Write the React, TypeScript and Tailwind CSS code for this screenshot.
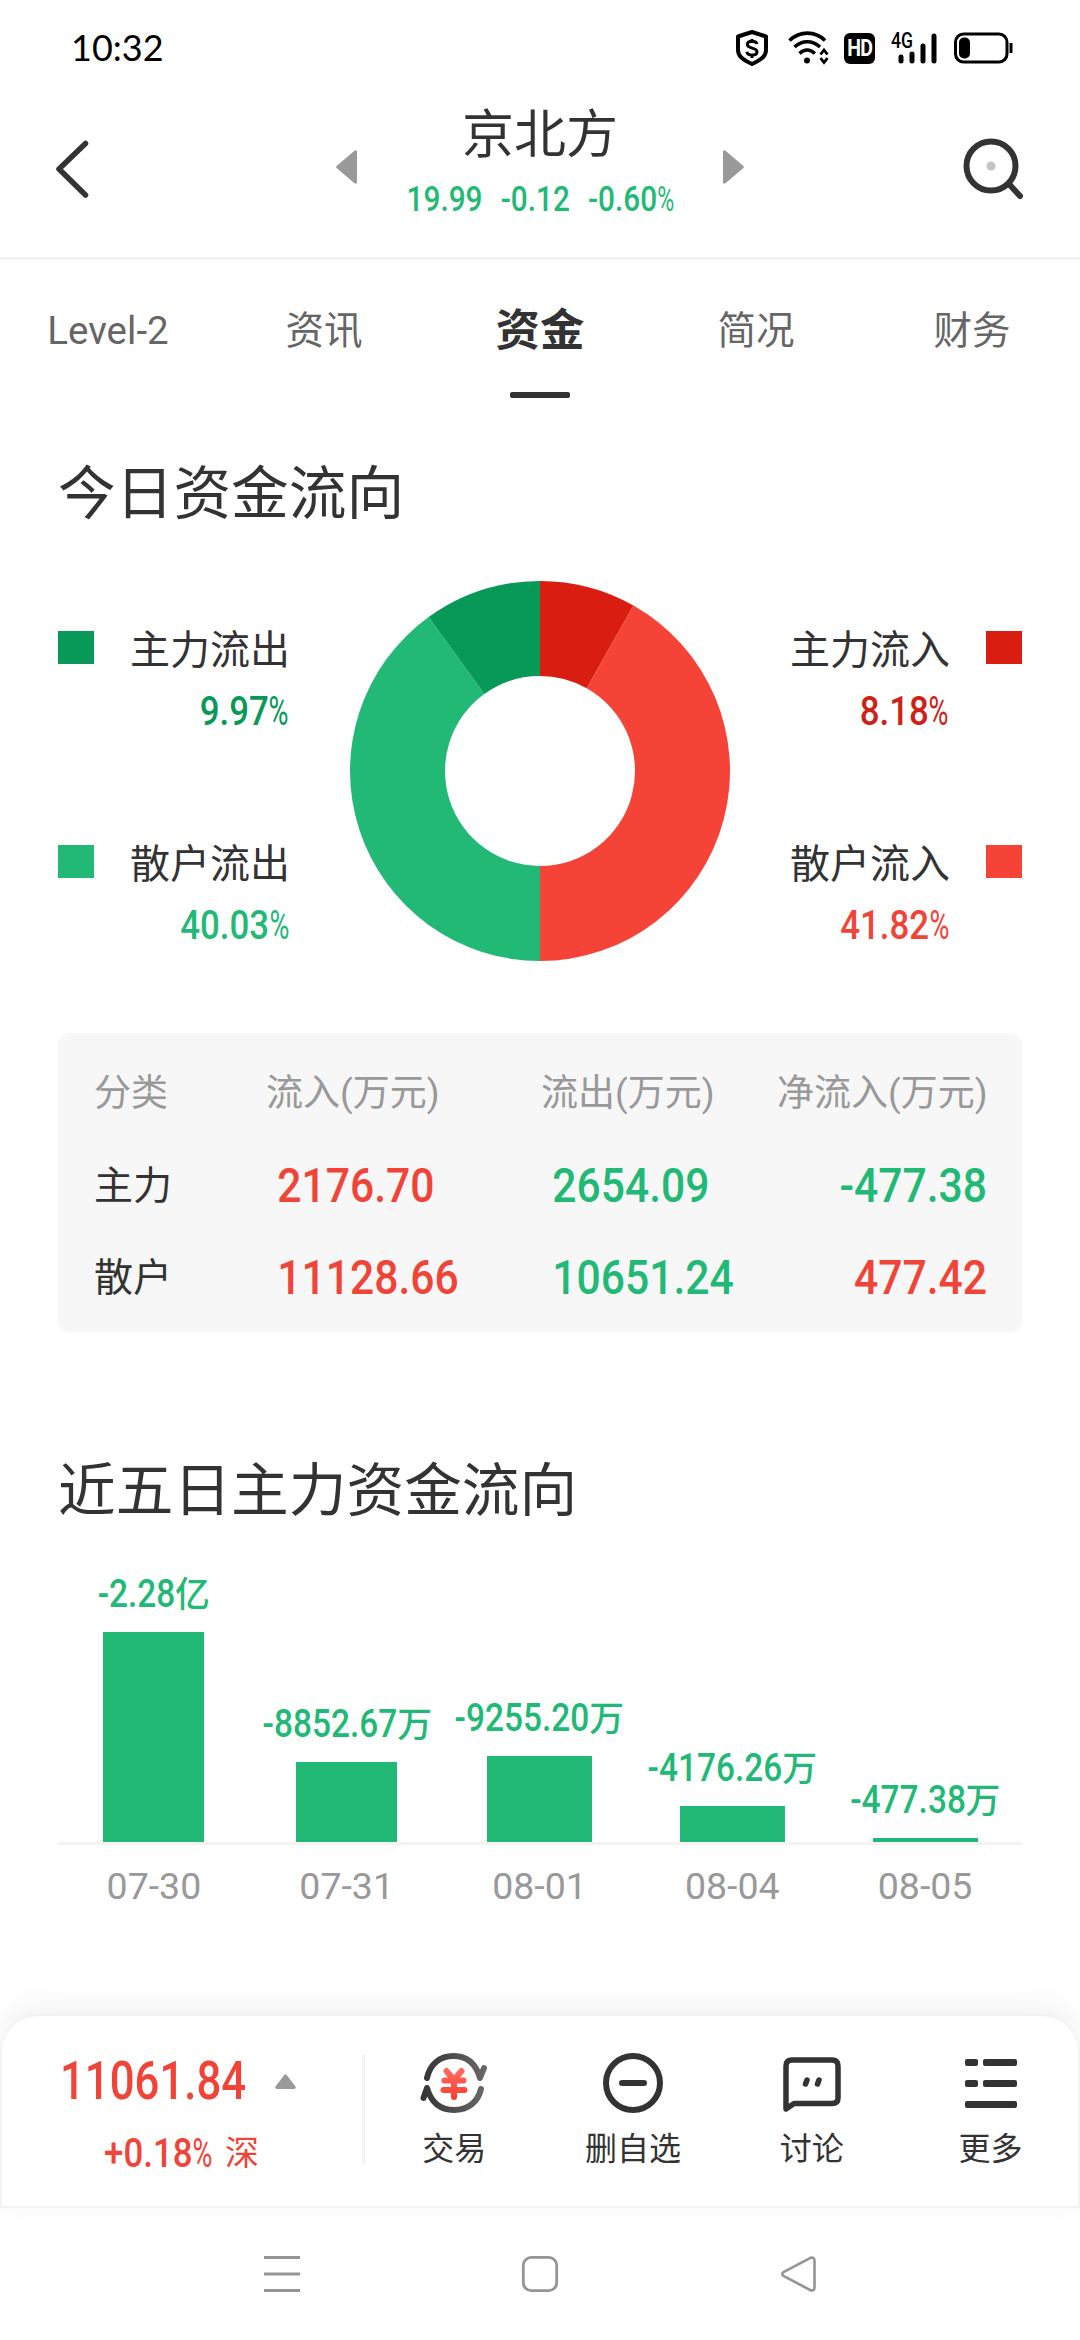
import React from 'react';
import clsx from 'clsx';

const legendLeft = [
  { label: '主力流出', value: '9.97%', box: 'bg-[#089857]', text: 'text-[#089857]' },
  { label: '散户流出', value: '40.03%', box: 'bg-[#22b977]', text: 'text-[#22b977]' },
];

const legendRight = [
  { label: '主力流入', value: '8.18%', box: 'bg-[#d91e11]', text: 'text-[#cc2217]' },
  { label: '散户流入', value: '41.82%', box: 'bg-[#f54437]', text: 'text-[#f04438]' },
];

const slices = [
  { value: 8.18, color: '#d91e11' },
  { value: 41.82, color: '#f54437' },
  { value: 40.03, color: '#22b977' },
  { value: 9.97, color: '#089857' },
];

const rows = [
  { name: '主力', in: '2176.70', out: '2654.09', net: '-477.38', netColor: 'text-[#22b977]' },
  { name: '散户', in: '11128.66', out: '10651.24', net: '477.42', netColor: 'text-[#f04438]' },
];

const days = [
  { date: '07-30', value: '-2.28', unit: '亿', width: 101, height: 210 },
  { date: '07-31', value: '-8852.67', unit: '万', width: 101, height: 80 },
  { date: '08-01', value: '-9255.20', unit: '万', width: 105, height: 86 },
  { date: '08-04', value: '-4176.26', unit: '万', width: 105, height: 36 },
  { date: '08-05', value: '-477.38', unit: '万', width: 105, height: 4 },
];

const tabs = ['Level-2', '资讯', '资金', '简况', '财务'];

// Narrow figures, with a slim percent sign
const Num: React.FC<{ children: string; className?: string; scale?: string }> = ({
  children,
  className,
  scale = 'scale-x-[0.85]',
}) => {
  const percent = children.endsWith('%');
  return (
    <span className={clsx('inline-block whitespace-pre font-medium', scale, className)}>
      {percent ? children.slice(0, -1) : children}
      {percent && <span className="inline-block w-[0.57em] origin-left scale-x-[0.78] font-normal">%</span>}
    </span>
  );
};

const StatusBar = () => (
  <div className="flex h-24 items-center justify-between pl-[71px] pr-[67px] text-black">
    <span className="-mt-[3px] font-['Lato'] text-[36px] leading-none">10:32</span>
    <div className="flex items-center">
      <svg width="34" height="36" viewBox="0 0 34 36" fill="none" stroke="#000">
        <path d="M17 2 31 6.500V20c0 5-2.500 8.500-14 14C5.500 28.500 3 25 3 20V6.500Z" strokeWidth="4" strokeLinejoin="round" />
        <path d="M22 14c-.5-2-2.500-2.800-5-2.800s-4.700 1-4.700 3.300c0 4.500 9.700 2.700 9.700 7.200 0 2.200-2.200 3.400-4.800 3.400-3 0-5-1.200-5.400-3.300M17 9v4M17 24v4" strokeWidth="3" />
      </svg>
      <svg className="ml-[19px]" width="41" height="34" viewBox="0 0 41 34" fill="none" stroke="#000" strokeWidth="3.600">
        <path d="M1.500 9.500C12-.3 27-.3 37 9.500M6.500 16C14 9 24.500 9 32 16M11.500 22.500c4.700-4.500 10.500-4.500 15.300 0" />
        <circle cx="19" cy="29.500" r="3" fill="#000" stroke="none" />
        <path d="m32.500 23.500 3.500-4.500 3.500 4.500M32.500 27l3.500 4.500 3.500-4.500" strokeWidth="2.800" />
      </svg>
      <span className="ml-[15px] flex h-[31px] w-[31px] items-center justify-center rounded-[6px] bg-black">
        <span className="font-['Roboto'] text-[23px] font-bold leading-none tracking-[-1px] text-white scale-x-[0.85]">HD</span>
      </span>
      <div className="relative ml-[17px] h-[32px] w-[45px]">
        <span className="absolute -left-px -top-[3px] origin-left font-['Roboto'] text-[22px] font-medium leading-[24px] scale-x-[0.8]">4G</span>
        <svg width="45" height="32" viewBox="0 0 45 32" stroke="#000" strokeWidth="5" strokeLinecap="round">
          <path d="M9 25v4M20 22v7M31 14v15M42 4v25" />
        </svg>
      </div>
      <svg className="ml-[17px]" width="59" height="32" viewBox="0 0 59 32" fill="none">
        <rect x="1.500" y="2" width="51.500" height="28" rx="8" stroke="#000" strokeWidth="3" />
        <rect x="5" y="5.500" width="11" height="21" rx="5" fill="#000" />
        <path d="M57 11v10" stroke="#000" strokeWidth="3" />
      </svg>
    </div>
  </div>
);

const Header = () => (
  <header className="flex h-[164px] items-center justify-between border-b-[3px] border-[#f3f3f3] px-[56px] pb-4">
    <div className="w-[120px]">
      <svg width="34" height="60" viewBox="0 0 34 60" fill="none" stroke="#333" strokeWidth="5.500" strokeLinecap="round" strokeLinejoin="round">
        <path d="M29.500 4.500 3 30l26.500 26" />
      </svg>
    </div>
    <div className="-mt-[3px] flex items-center">
      <svg width="21" height="34" viewBox="0 0 21 34" fill="#999">
        <path d="M.6 16 18.500.7Q21-.5 21 2v30q0 2.500-2.500 1.300L.6 18q-1-1 0-2Z" />
      </svg>
      <div className="flex w-[366px] flex-col items-center">
        <h1 className="text-[52px] leading-[65px] text-[#333]">京北方</h1>
        <Num className="text-[35px] leading-[64px] text-[#22b977] [word-spacing:2px]">{'19.99  -0.12  -0.60%'}</Num>
      </div>
      <svg width="21" height="34" viewBox="0 0 21 34" fill="#999">
        <path d="M20.400 16 2.500.7Q0-.5 0 2v30q0 2.500 2.500 1.300L20.400 18q1-1 0-2Z" />
      </svg>
    </div>
    <div className="flex w-[120px] justify-end">
      <svg width="62" height="62" viewBox="0 0 62 62" fill="none" stroke="#333" strokeWidth="6">
        <circle cx="29" cy="28" r="24.500" />
        <circle cx="29" cy="28" r="4.500" fill="#c4c4c4" stroke="none" />
        <path d="m47 46 11 12" strokeLinecap="round" />
      </svg>
    </div>
  </header>
);

const Legend = ({ items, right }: { items: typeof legendLeft; right?: boolean }) => (
  <div className="flex w-[232px] flex-col gap-[94px] pt-[40px]">
    {items.map((item) => (
      <div key={item.label} className={clsx('flex justify-between', right && 'flex-row-reverse')}>
        <span className={clsx('mt-2.5 h-[33px] w-9', item.box)} />
        <div className="flex w-[160px] flex-col items-end">
          <span className="text-[40px] leading-[60px] text-[#333]">{item.label}</span>
          <Num className={clsx('mr-px origin-right text-[41px] leading-[60px]', item.text)}>{item.value}</Num>
        </div>
      </div>
    ))}
  </div>
);

const Donut = () => {
  let angle = -Math.PI / 2;
  const at = (r: number, a: number) => `${190 + r * Math.cos(a)} ${190 + r * Math.sin(a)}`;
  return (
    <svg width="380" height="380" viewBox="0 0 380 380">
      {slices.map((s) => {
        const start = angle;
        const end = start + (s.value / 100) * Math.PI * 2;
        angle = end;
        return (
          <path
            key={s.color}
            fill={s.color}
            d={`M${at(190, start)}A190 190 0 0 1 ${at(190, end)}L${at(95, end)}A95 95 0 0 0 ${at(95, start)}Z`}
          />
        );
      })}
    </svg>
  );
};

const FlowTable = () => (
  <div className="mt-[72px] h-[299px] rounded-xl bg-[#f7f7f7] px-9 pt-[15px]">
    <div className="grid h-[92px] grid-cols-[172px_275px_236px_209px] items-center whitespace-nowrap text-[37px] text-[#999]">
      <span>分类</span>
      <span>流入(万元)</span>
      <span>流出(万元)</span>
      <span className="text-right">净流入(万元)</span>
    </div>
    {rows.map((row) => (
      <div key={row.name} className="grid h-[92px] grid-cols-[172px_275px_236px_209px] items-center text-[49px]">
        <span className="text-[39px] text-[#333]">{row.name}</span>
        <Num scale="scale-x-[0.87]" className="origin-left pl-[13px] text-[#f04438]">{row.in}</Num>
        <Num scale="scale-x-[0.87]" className="origin-left pl-[13px] text-[#22b977]">{row.out}</Num>
        <Num scale="scale-x-[0.87]" className={clsx('-mr-px origin-right text-right', row.netColor)}>{row.net}</Num>
      </div>
    ))}
  </div>
);

const BarChart = () => (
  <div>
    <div className="grid h-[319px] grid-cols-5 items-end border-b-[3px] border-[#f3f3f3]">
      {days.map((d) => (
        <div key={d.date} className="flex flex-col items-center pr-px">
          <span className="mb-[13px] whitespace-nowrap pr-1 text-[38px] font-medium leading-[50px] text-[#22b977] scale-x-[0.88]">
            {d.value}
            <span className="inline-block origin-left text-[35px] leading-none scale-x-[1.13]">{d.unit}</span>
          </span>
          <div className="bg-[#22b977]" style={{ width: d.width, height: d.height }} />
        </div>
      ))}
    </div>
    <div className="mt-[16px] grid grid-cols-5 text-center text-[37.500px] leading-[50px] text-[#999]">
      {days.map((d) => (
        <span key={d.date} className="pr-px">{d.date}</span>
      ))}
    </div>
  </div>
);

const TradeIcon = () => (
  <svg width="68" height="62" viewBox="0 0 68 62" fill="none" strokeWidth="6" strokeLinecap="round" strokeLinejoin="round">
    <defs>
      <linearGradient id="ring" x1="0" x2="68" y1="0" y2="0" gradientUnits="userSpaceOnUse">
        <stop offset="0" stopColor="#333" />
        <stop offset="1" stopColor="#6a6a6a" />
      </linearGradient>
      <linearGradient id="yen" x1="0" x2="0" y1="15" y2="48" gradientUnits="userSpaceOnUse">
        <stop offset="0" stopColor="#ff6f63" />
        <stop offset="1" stopColor="#f93b2f" />
      </linearGradient>
    </defs>
    <path d="M7 26C10 12 20 4 33.500 4S56 12 60 26l4-10M61 37C58 50 48 58 34 58S11 50 7 36L3.500 46" stroke="url(#ring)" />
    <path d="m26.500 19 7.500 9 7.500-9M24.500 28.500h19M23.500 38h21M34 28v17" stroke="url(#yen)" />
  </svg>
);

const RemoveIcon = () => (
  <svg width="62" height="62" viewBox="0 0 62 62" fill="none" stroke="#333" strokeWidth="6">
    <circle cx="31" cy="31" r="27" />
    <path d="M20 31h22" strokeLinecap="round" />
  </svg>
);

const ChatIcon = () => (
  <svg width="60" height="62" viewBox="0 0 60 62" fill="none" stroke="#333" strokeLinecap="round" strokeLinejoin="round">
    <path d="M4 57V14q0-6 6-6h40q6 0 6 6v32q0 5.500-6 5.500H12Z" strokeWidth="5.500" />
    <path d="m25 28-1.500 4M37 28l-1.500 4" strokeWidth="5.500" />
  </svg>
);

const MoreIcon = () => (
  <svg width="52" height="62" viewBox="0 0 52 62" fill="#333">
    <rect x="0" y="7" width="13" height="7" rx="2" />
    <rect x="18" y="7" width="34" height="7" rx="2" />
    <rect x="0" y="28" width="13" height="7" rx="2" />
    <rect x="18" y="28" width="34" height="7" rx="2" />
    <rect x="0" y="49" width="52" height="7" rx="2" />
  </svg>
);

const actions = [
  { label: '交易', icon: TradeIcon },
  { label: '删自选', icon: RemoveIcon },
  { label: '讨论', icon: ChatIcon },
  { label: '更多', icon: MoreIcon },
];

const BottomPanel = () => (
  <div className="mt-auto flex h-[194px] rounded-t-[38px] border-2 border-[#f3f3f3] bg-white shadow-[0_-8px_30px_rgba(0,0,0,0.06)]">
    <div className="w-[360px] pt-[34px]">
      <div className="flex items-center pl-[58px]">
        <div className="w-[215px]">
          <Num scale="scale-x-[0.825]" className="origin-left text-[53px] leading-[62px] text-[#f04438]">11061.84</Num>
        </div>
        <svg width="21" height="15" viewBox="0 0 21 15" fill="#999">
          <path d="M9.500.7.500 12.500Q-.3 15 2 15h17q2.300 0 1.500-2.500L11.500.7q-1-1-2 0Z" />
        </svg>
      </div>
      <div className="flex items-center justify-end pr-[103px] pt-[10px] text-[#f04438]">
        <Num className="origin-right text-[41px] leading-[62px]">+0.18%</Num>
        <span className="ml-[13px] text-[34px] leading-[62px]">深</span>
      </div>
    </div>
    <div className="mt-[39px] h-[109px] w-[3px] bg-[#f3f3f3]" />
    <div className="-mr-[2px] grid flex-1 grid-cols-4">
      {actions.map(({ label, icon: Icon }) => (
        <button key={label} className="flex flex-col items-center pt-[36px]">
          <Icon />
          <span className="mt-[13px] text-[32px] leading-[44px] text-[#333]">{label}</span>
        </button>
      ))}
    </div>
  </div>
);

const SystemNav = () => (
  <nav className="flex h-[132px] items-center justify-center gap-[220px] text-[#959595]">
    <svg width="38" height="38" viewBox="0 0 38 38" stroke="currentColor" strokeWidth="3">
      <path d="M1 2.500h36M1 19h36M1 35.500h36" />
    </svg>
    <svg width="38" height="38" viewBox="0 0 38 38" fill="none" stroke="currentColor" strokeWidth="2.800">
      <rect x="2.300" y="2.300" width="33.400" height="33.400" rx="8" />
    </svg>
    <svg width="38" height="38" viewBox="0 0 38 38" fill="none" stroke="currentColor" strokeWidth="2.600">
      <path d="M31.500 2.800 4.500 17q-2.500 2 0 4l27 14.200q4 1 4-2.700V5.500q0-3.700-4-2.700Z" />
    </svg>
  </nav>
);

export default function App() {
  return (
    <div className="flex h-[2340px] w-[1080px] flex-col overflow-hidden bg-white font-['Roboto','Noto_Sans_CJK_SC',sans-serif]">
      <StatusBar />
      <Header />

      {/* Tabs */}
      <div className="grid h-[138px] grid-cols-5 pt-[36px]">
        {tabs.map((tab) => {
          const active = tab === '资金';
          return (
            <div key={tab} className="flex flex-col items-center">
              <span className={clsx('leading-[70px]', active ? 'text-[44.500px] font-bold text-[#333]' : 'text-[38.500px] text-[#666]')}>
                {tab}
              </span>
              {active && <span className="mt-[26px] h-[6px] w-[60px] rounded-[2px] bg-[#333]" />}
            </div>
          );
        })}
      </div>

      <main className="px-[58px] text-[#333]">
        <h2 className="mt-[61px] text-[57.700px] leading-[70px]">今日资金流向</h2>
        <div className="mt-[52px] flex justify-between">
          <Legend items={legendLeft} />
          <Donut />
          <Legend items={legendRight} right />
        </div>
        <FlowTable />
        <h2 className="mt-[124px] text-[57.700px] leading-[70px]">近五日主力资金流向</h2>
        <BarChart />
      </main>

      <BottomPanel />
      <SystemNav />
    </div>
  );
}
